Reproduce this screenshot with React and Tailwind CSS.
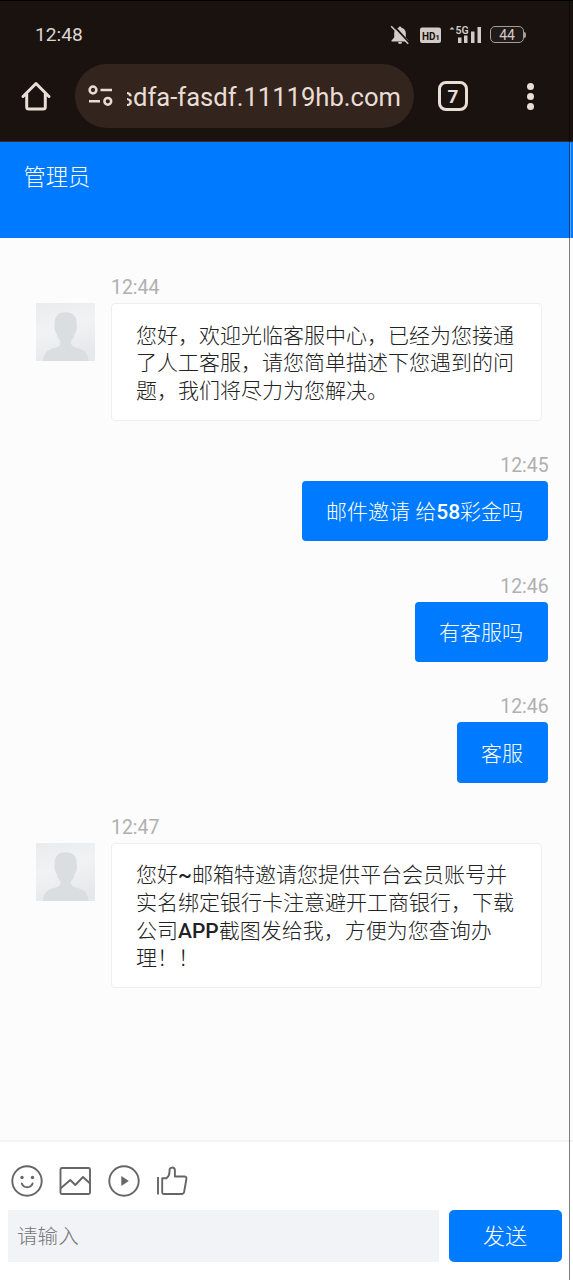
import React from 'react';
import clsx from 'clsx';

const messages = [
  {
    id: 1,
    time: '12:44',
    lines: ['您好，欢迎光临客服中心，已经为您接通', '了人工客服，请您简单描述下您遇到的问', '题，我们将尽力为您解决。'],
  },
  { id: 2, time: '12:45', mine: true, lines: ['邮件邀请 给58彩金吗'] },
  { id: 3, time: '12:46', mine: true, lines: ['有客服吗'] },
  { id: 4, time: '12:46', mine: true, lines: ['客服'] },
  {
    id: 5,
    time: '12:47',
    lines: ['您好~邮箱特邀请您提供平台会员账号并', '实名绑定银行卡注意避开工商银行，下载', '公司APP截图发给我，方便为您查询办', '理！！'],
  },
];

// Latin runs are set heavier than the Chinese text
function MixedText({ text }) {
  return text.split(/([A-Za-z0-9~]+)/).map((part, i) =>
    i % 2 ? (
      <span key={i} className="font-['Roboto'] font-medium">{part}</span>
    ) : (
      part
    )
  );
}

function StatusBar() {
  return (
    <div className="flex h-[64px] items-center border-t border-black pl-[35px] pr-[47px] pt-[4px]">
      <span className="text-[19.2px] leading-none text-[#dcd6d2]">12:48</span>
      <div className="ml-auto flex items-center text-[#d2ccc8]">
        {/* muted bell */}
        <svg width="20" height="20" viewBox="0 0 20 20" className="mr-[10px]">
          <path d="M10 1.500c-.8 0-1.400.6-1.400 1.300C5.800 3.500 4.200 5.500 4.200 8v4.500L1.500 15.500v1h17v-1l-2.700-3V8c0-2.500-1.600-4.500-4.400-5.200 0-.7-.6-1.300-1.400-1.300zM8 17a2 2 0 0 0 4 0z" fill="currentColor" />
          <path d="M3.600.7l16 17.500" stroke="#1a120e" strokeWidth="2" />
          <path d="M1.200 1.200l17 17.500" stroke="currentColor" strokeWidth="1.500" />
        </svg>
        <svg width="21" height="16" viewBox="0 0 21 16" className="mr-[8px]">
          <rect width="21" height="15.500" y=".5" rx="2" fill="currentColor" />
          <text x="2" y="12.500" fontSize="11.500" fontWeight="700" fontFamily="Roboto, sans-serif" fill="#1a120e" textLength="13.500" lengthAdjust="spacingAndGlyphs">HD</text>
          <text x="15.300" y="12.500" fontSize="8" fontWeight="700" fontFamily="Roboto, sans-serif" fill="#1a120e">1</text>
        </svg>
        <svg width="33" height="20" viewBox="0 0 33 20" className="mr-[8px]" fill="currentColor">
          <path d="M.5 4.500L3 2l2.500 2.500z" />
          <path d="M9 12.500h3.500v5.500H9zM15 10.500h3.500V18H15zM22 6.500h3.500V18H22zM28.500 2H32v16h-3.500z" />
          <text x="6.500" y="8.800" fontSize="10.500" fontWeight="600" fontFamily="Roboto, sans-serif" stroke="#1a120e" strokeWidth="1.500" paintOrder="stroke">5G</text>
        </svg>
        <span className="flex h-[17px] w-[34px] items-center justify-center rounded-[5px] border-[1.5px] border-[#a39c98] bg-[#211b18] text-[14px] leading-none">
          44
        </span>
        <span className="h-[6px] w-[2px] rounded-r-[2px] bg-[#a39c98]" />
      </div>
    </div>
  );
}

function BrowserBar() {
  return (
    <div className="flex h-[64px] items-center text-[#eaddd6]">
      <svg width="32" height="32" viewBox="0 0 32 32" className="ml-[20px]" fill="none" stroke="currentColor" strokeWidth="3" strokeLinejoin="round" strokeLinecap="round">
        <path d="M3 16.500L16 3.500l13 13M6.700 14v13q0 2 2 2h14.600q2 0 2-2V14" />
      </svg>
      <div className="ml-[23px] flex h-[64px] w-[339px] items-center rounded-full bg-[#33251e] pl-[13px] pr-[13px]">
        <svg width="26" height="22" viewBox="0 0 26 22" fill="none" stroke="currentColor" strokeWidth="2.500" className="shrink-0">
          <circle cx="5" cy="5" r="3.400" />
          <path d="M12.500 5h11.500M1 16.300h11" />
          <circle cx="19.800" cy="16.300" r="3.400" />
        </svg>
        <div className="ml-[13px] flex flex-1 justify-end overflow-hidden pt-[2px]">
          <span className="whitespace-nowrap text-[25.6px] leading-[34px]">sdfa-fasdf.11119hb.com</span>
        </div>
      </div>
      <div className="ml-[24px] flex h-[30px] w-[30px] items-center justify-center rounded-[8px] border-[3px] border-[#eaddd6] text-[19px] font-bold leading-none">
        7
      </div>
      <div className="ml-[59px] flex flex-col gap-[3px]">
        <i className="size-[7px] rounded-full bg-[#eaddd6]" />
        <i className="size-[7px] rounded-full bg-[#eaddd6]" />
        <i className="size-[7px] rounded-full bg-[#eaddd6]" />
      </div>
    </div>
  );
}

function Avatar() {
  return (
    <svg width="59" height="58" viewBox="0 0 59 58" className="mr-[16px] shrink-0">
      <defs>
        <linearGradient id="avatarBg" x1="0" y1="0" x2="0.3" y2="1">
          <stop offset="0" stopColor="#e9ebed" />
          <stop offset="0.5" stopColor="#f1f2f4" />
          <stop offset="1" stopColor="#e6e9eb" />
        </linearGradient>
      </defs>
      <path d="M0 0h59v58H0z" fill="url(#avatarBg)" />
      <path d="M29.500 9.300c-7.500 0-11.300 4.500-10.800 12-.9 4 .3 7.500 2 9.500.7 3.500 2 5.500 3.800 7.500.4 4-1.500 5.200-5.500 6.500C11.500 47 8 49 6.800 58h46c-1.200-9-5-11-12.300-13.200-4-1.300-5.800-2.500-5.500-6.500 1.800-2 3-4 3.700-7.500 1.700-2 2.900-5.500 2-9.500.3-6-2-12-11.200-12z" fill="#dadee1" />
    </svg>
  );
}

function Message({ message }) {
  const { mine, time, lines } = message;
  return (
    <div className={clsx('flex flex-col', mine ? 'items-end pr-[25.4px]' : 'pl-[36px]')}>
      <span className={clsx('mb-[6px] h-[20px] text-[19.4px] leading-[22px] text-[#b0b0b0]', mine ? '-mr-[1px]' : 'ml-[75px]')}>
        {time}
      </span>
      <div className="flex items-start">
        {!mine && <Avatar />}
        <div
          className={clsx(
            'whitespace-nowrap rounded-[4px] text-[21px] font-light leading-[27.7px]',
            mine
              ? 'bg-[#007aff] px-[24.5px] pb-[14.2px] pt-[18.3px] text-white'
              : 'w-[431px] border border-[#efefef] bg-white pb-[14px] pl-[24px] pt-[18.3px] text-[#222]'
          )}
        >
          {lines.map((line) => (
            <p key={line}>
              <MixedText text={line} />
            </p>
          ))}
        </div>
      </div>
    </div>
  );
}

function Composer() {
  return (
    <footer className="h-[140px] border-t-2 border-[#f4f4f4] bg-white">
      <div className="flex h-[68px] items-end gap-[16.5px] pb-[13.5px] pl-[10.5px] text-[#666]">
        <svg width="32" height="32" viewBox="0 0 32 32" fill="none" stroke="currentColor" strokeWidth="1.900">
          <circle cx="16" cy="16" r="14.700" />
          <circle cx="11" cy="12.500" r="1.700" fill="currentColor" stroke="none" />
          <circle cx="21.500" cy="12.500" r="1.700" fill="currentColor" stroke="none" />
          <path d="M10.800 18.500c1.800 5 9 5 10.800 0" strokeLinecap="round" />
        </svg>
        <svg width="32" height="32" viewBox="0 0 32 32" fill="none" stroke="currentColor" strokeWidth="1.900" strokeLinejoin="round">
          <rect x="1.500" y="3" width="29.500" height="26" rx="1.500" />
          <path d="M1.500 23.500L11.300 15l5 5 7.700-8 7 6.500" />
        </svg>
        <svg width="32" height="32" viewBox="0 0 32 32" fill="none" stroke="currentColor" strokeWidth="1.900">
          <circle cx="16" cy="16" r="14.700" />
          <path d="M13.300 11l7.500 5-7.500 5z" fill="currentColor" stroke="none" />
        </svg>
        <svg width="32" height="32" viewBox="0 0 32 32" fill="none" stroke="currentColor" strokeWidth="1.900" strokeLinejoin="round">
          <path d="M2 12v17.500M6.200 13.200h4.300c2.300-1.700 3-3.500 3-6.200V5.200c0-3.400 5.200-3.600 5.400 0v6.300h9.500c1.500 0 2.300 1 2 2.500l-2.300 13c-.3 1.400-.8 2-2 2H7.700q-1.500 0-1.500-1.500z" />
        </svg>
      </div>
      <div className="flex h-[51.5px] pl-[7.5px]">
        <div className="flex w-[431px] items-center bg-[#f2f3f7] pl-[9.5px] pt-[3px] text-[20.6px] font-light text-[#777]">请输入</div>
        <button className="ml-[10px] w-[113px] rounded-[5px] bg-[#007aff] pt-[2px] text-[22px] font-light text-white">发送</button>
      </div>
    </footer>
  );
}

export default function App() {
  return (
    <div className="relative flex h-[1280px] w-[573px] flex-col overflow-hidden bg-[#fcfcfc] font-['Roboto','Noto_Sans_CJK_SC',sans-serif]">
      <div className="h-[142px] shrink-0 border-b border-[#3a2c24] bg-[#1a120e]">
        <StatusBar />
        <BrowserBar />
      </div>
      <header className="h-[96px] shrink-0 bg-[#007aff] pl-[23.5px] pt-[18.5px] text-[22.3px] font-light leading-[32px] text-white">
        管理员
      </header>
      <main className="flex flex-1 flex-col gap-[34.4px] pt-[39.4px]">
        {messages.map((m) => (
          <Message key={m.id} message={m} />
        ))}
      </main>
      <Composer />
      {/* screen edge */}
      <div className="absolute bottom-0 left-[569px] top-0 w-px bg-black/50" />
      <div className="absolute left-[570px] top-[143px] h-[95px] w-px bg-white/35" />
    </div>
  );
}
